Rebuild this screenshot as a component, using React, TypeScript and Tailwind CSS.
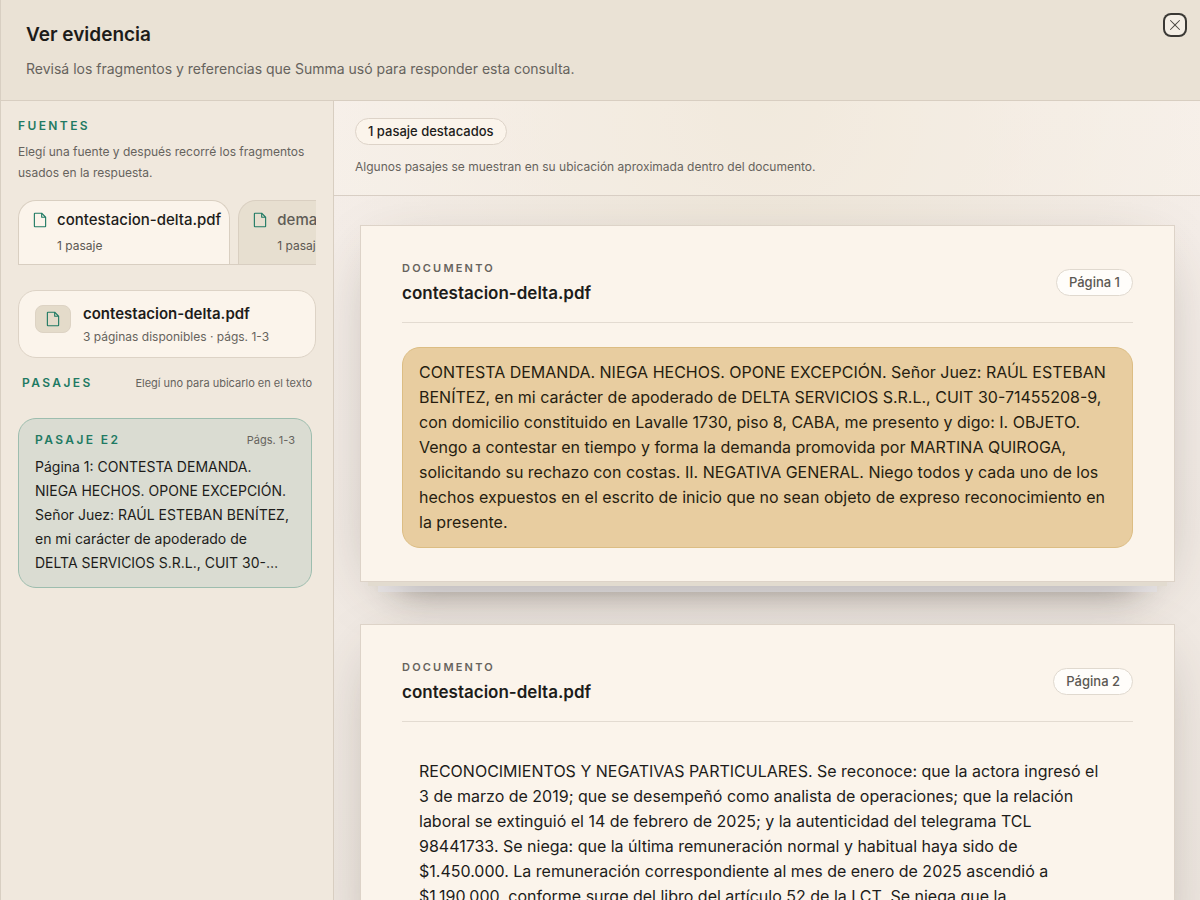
import React, { useState } from 'react';
import { PiFile, PiX } from 'react-icons/pi';

type Source = { id: string; name: string; passages: string };
type Page = { number: number; text: string; highlighted: boolean };

const SOURCES: Source[] = [
    { id: 'contestacion', name: 'contestacion-delta.pdf', passages: '1 pasaje' },
    { id: 'demanda', name: 'demanda-quiroga.pdf', passages: '1 pasaje' },
];

const PAGES: Page[] = [
    {
        number: 1,
        highlighted: true,
        text: 'CONTESTA DEMANDA. NIEGA HECHOS. OPONE EXCEPCIÓN. Señor Juez: RAÚL ESTEBAN BENÍTEZ, en mi carácter de apoderado de DELTA SERVICIOS S.R.L., CUIT 30-71455208-9, con domicilio constituido en Lavalle 1730, piso 8, CABA, me presento y digo: I. OBJETO. Vengo a contestar en tiempo y forma la demanda promovida por MARTINA QUIROGA, solicitando su rechazo con costas. II. NEGATIVA GENERAL. Niego todos y cada uno de los hechos expuestos en el escrito de inicio que no sean objeto de expreso reconocimiento en la presente.',
    },
    {
        number: 2,
        highlighted: false,
        text: 'RECONOCIMIENTOS Y NEGATIVAS PARTICULARES. Se reconoce: que la actora ingresó el 3 de marzo de 2019; que se desempeñó como analista de operaciones; que la relación laboral se extinguió el 14 de febrero de 2025; y la autenticidad del telegrama TCL 98441733. Se niega: que la última remuneración normal y habitual haya sido de $1.450.000. La remuneración correspondiente al mes de enero de 2025 ascendió a $1.190.000, conforme surge del libro del artículo 52 de la LCT. Se niega que la',
    },
];

const SourceTab: React.FC<{ source: Source; active: boolean; onSelect: () => void }> = ({ source, active, onSelect }) => (
    <button
        type="button"
        role="tab"
        aria-selected={active}
        onClick={onSelect}
        className={`flex shrink-0 items-start gap-2 rounded-t-[18px] border border-b-0 border-[#d9cfc1] pt-2 pr-2 pb-2 pl-3 text-left ${
            active ? 'bg-[#fbf4eb] text-[#1d1c1a]' : 'bg-[#e7dfd0] text-[#5f5c56]'
        }`}
    >
        <PiFile size={18} className="mt-[2px] shrink-0 text-[#1f7a63]" />
        <span className="flex flex-col">
            <span className="text-[15px] leading-[22px] font-medium whitespace-nowrap">{source.name}</span>
            <span className="mt-[5px] text-xs leading-5 text-[#5b5852]">{source.passages}</span>
        </span>
    </button>
);

const Paper: React.FC<{ page: Page }> = ({ page }) => (
    <article className="border border-[#ddd3c8] bg-[#fbf4eb] px-[41px] py-[33px] shadow-[0_12px_0_-8px_#e2dbcf,0_28px_0_-18px_rgba(226,226,234,0.5),0_46px_32px_-40px_rgba(50,42,36,0.42),0_16px_60px_-22px_rgba(60,50,42,0.4)]">
        <header className="flex items-center justify-between border-b border-[#e3dbd1] pb-[17px]">
            <div>
                <p className="text-[11px] leading-[18px] font-semibold tracking-[0.2em] text-[#66635d] uppercase">Documento</p>
                <h3 className="mt-1 text-[17px] leading-6 font-semibold text-[#1d1c1a]">contestacion-delta.pdf</h3>
            </div>
            <span className="rounded-full border border-[#e0d9cf] bg-[#fffdfa] px-3 py-1 text-[13px] leading-[17px] font-medium text-[#5b5852]">
                Página {page.number}
            </span>
        </header>
        <p
            className={`mt-6 rounded-[18px] border py-3 pr-[22px] pl-4 text-base leading-[25px] ${
                page.highlighted ? 'border-[#dcbd83] bg-[#e8cda0] text-[#261d10]' : 'border-transparent text-[#1d1c1a]'
            }`}
        >
            {page.text}
        </p>
    </article>
);

export default function App() {
    const [sourceId, setSourceId] = useState('contestacion');

    return (
        <div className="flex h-screen flex-col overflow-hidden border-l border-[#d8cfc2] bg-[#f0e8dd] font-['Inter','Liberation_Sans',sans-serif] text-[#1d1c1a]">
            <header className="flex shrink-0 items-start justify-between border-b border-[#d8cec1] bg-[#eae2d5] pt-[13px] pr-[13px] pb-[19px] pl-[25px]">
                <div className="pt-2">
                    <h1 className="text-[19px] leading-7 font-semibold">Ver evidencia</h1>
                    <p className="mt-2 text-sm leading-6 text-[#66635d]">
                        Revisá los fragmentos y referencias que Summa usó para responder esta consulta.
                    </p>
                </div>
                <button
                    type="button"
                    aria-label="Cerrar"
                    className="flex size-6 items-center justify-center rounded-lg bg-[#f4eee5] text-[#4b4843] ring-2 ring-[#3b3935] ring-inset"
                >
                    <PiX size={16} />
                </button>
            </header>

            <div className="flex min-h-0 flex-1">
                <aside className="flex w-[333px] shrink-0 flex-col border-r border-[#d8cec1] px-[17px] pt-4">
                    <h2 className="text-xs leading-[18px] font-semibold tracking-[0.2em] text-[#1f7a63] uppercase">Fuentes</h2>
                    <p className="mt-1.5 text-xs leading-[21px] text-[#66635d]">
                        Elegí una fuente y después recorré los fragmentos usados en la respuesta.
                    </p>
                    <div role="tablist" className="mt-[17px] flex gap-2 overflow-hidden border-b border-[#d8cec1]">
                        {SOURCES.map(source => (
                            <SourceTab
                                key={source.id}
                                source={source}
                                active={source.id === sourceId}
                                onSelect={() => setSourceId(source.id)}
                            />
                        ))}
                    </div>

                    <div className="mt-[25px] flex items-start gap-3 rounded-[18px] border border-[#ddd3c6] bg-[#fbf4eb] px-4 pt-3 pb-[11px]">
                        <span className="mt-[2px] flex h-7 w-9 items-center justify-center rounded-lg border border-[#ddd3c4] bg-[#e4dbca] text-[#1f7a63]">
                            <PiFile size={18} />
                        </span>
                        <div>
                            <p className="text-[15px] leading-[22px] font-semibold">contestacion-delta.pdf</p>
                            <p className="mt-[3px] text-xs leading-[18px] text-[#66635d]">3 páginas disponibles · págs. 1-3</p>
                        </div>
                    </div>

                    <div className="mt-4 flex items-center justify-between px-1">
                        <h2 className="text-xs leading-[18px] font-semibold tracking-[0.2em] text-[#1f7a63] uppercase">Pasajes</h2>
                        <span className="text-[11px] leading-[18px] text-[#66635d]">Elegí uno para ubicarlo en el texto</span>
                    </div>

                    <div className="mt-[26px] pr-1">
                        <button
                            type="button"
                            className="block w-full rounded-[18px] border border-[#9dbdae] bg-[#dadcd2] px-4 py-3 text-left"
                        >
                            <span className="flex items-center justify-between">
                                <span className="text-xs leading-[18px] font-semibold tracking-[0.2em] text-[#1f7a63] uppercase">Pasaje E2</span>
                                <span className="text-[11px] leading-[18px] text-[#66635d]">Págs. 1-3</span>
                            </span>
                            <span className="mt-1.5 line-clamp-5 pr-1.5 text-sm leading-6">
                                Página 1: CONTESTA DEMANDA. NIEGA HECHOS. OPONE EXCEPCIÓN. Señor Juez: RAÚL ESTEBAN BENÍTEZ, en mi
                                carácter de apoderado de DELTA SERVICIOS S.R.L., CUIT 30-…
                            </span>
                        </button>
                    </div>
                </aside>

                <main className="flex min-w-0 flex-1 flex-col bg-[#f4ede8] bg-[radial-gradient(52%_60%_at_50%_0%,#ede5d7_0%,rgba(237,229,215,0)_100%),linear-gradient(to_bottom,#f5eee9,#eee7e0)]">
                    <div className="shrink-0 border-b border-[#d8cec4] bg-[#fbf4eb]/30 px-[21px] pt-[17px] pb-[18px]">
                        <p className="flex">
                            <span className="rounded-full border border-[#ddd3c8] bg-[#fbf4eb] px-3 py-1 text-[13px] leading-[17px] font-medium">
                                1 pasaje destacados
                            </span>
                        </p>
                        <p className="mt-3 text-xs leading-5 text-[#66635d]">
                            Algunos pasajes se muestran en su ubicación aproximada dentro del documento.
                        </p>
                    </div>
                    <div className="flex min-h-0 flex-1 flex-col gap-[42px] overflow-hidden pt-[29px] pr-[25px] pl-[26px]">
                        {PAGES.map(page => (
                            <Paper key={page.number} page={page} />
                        ))}
                    </div>
                </main>
            </div>
        </div>
    );
}
